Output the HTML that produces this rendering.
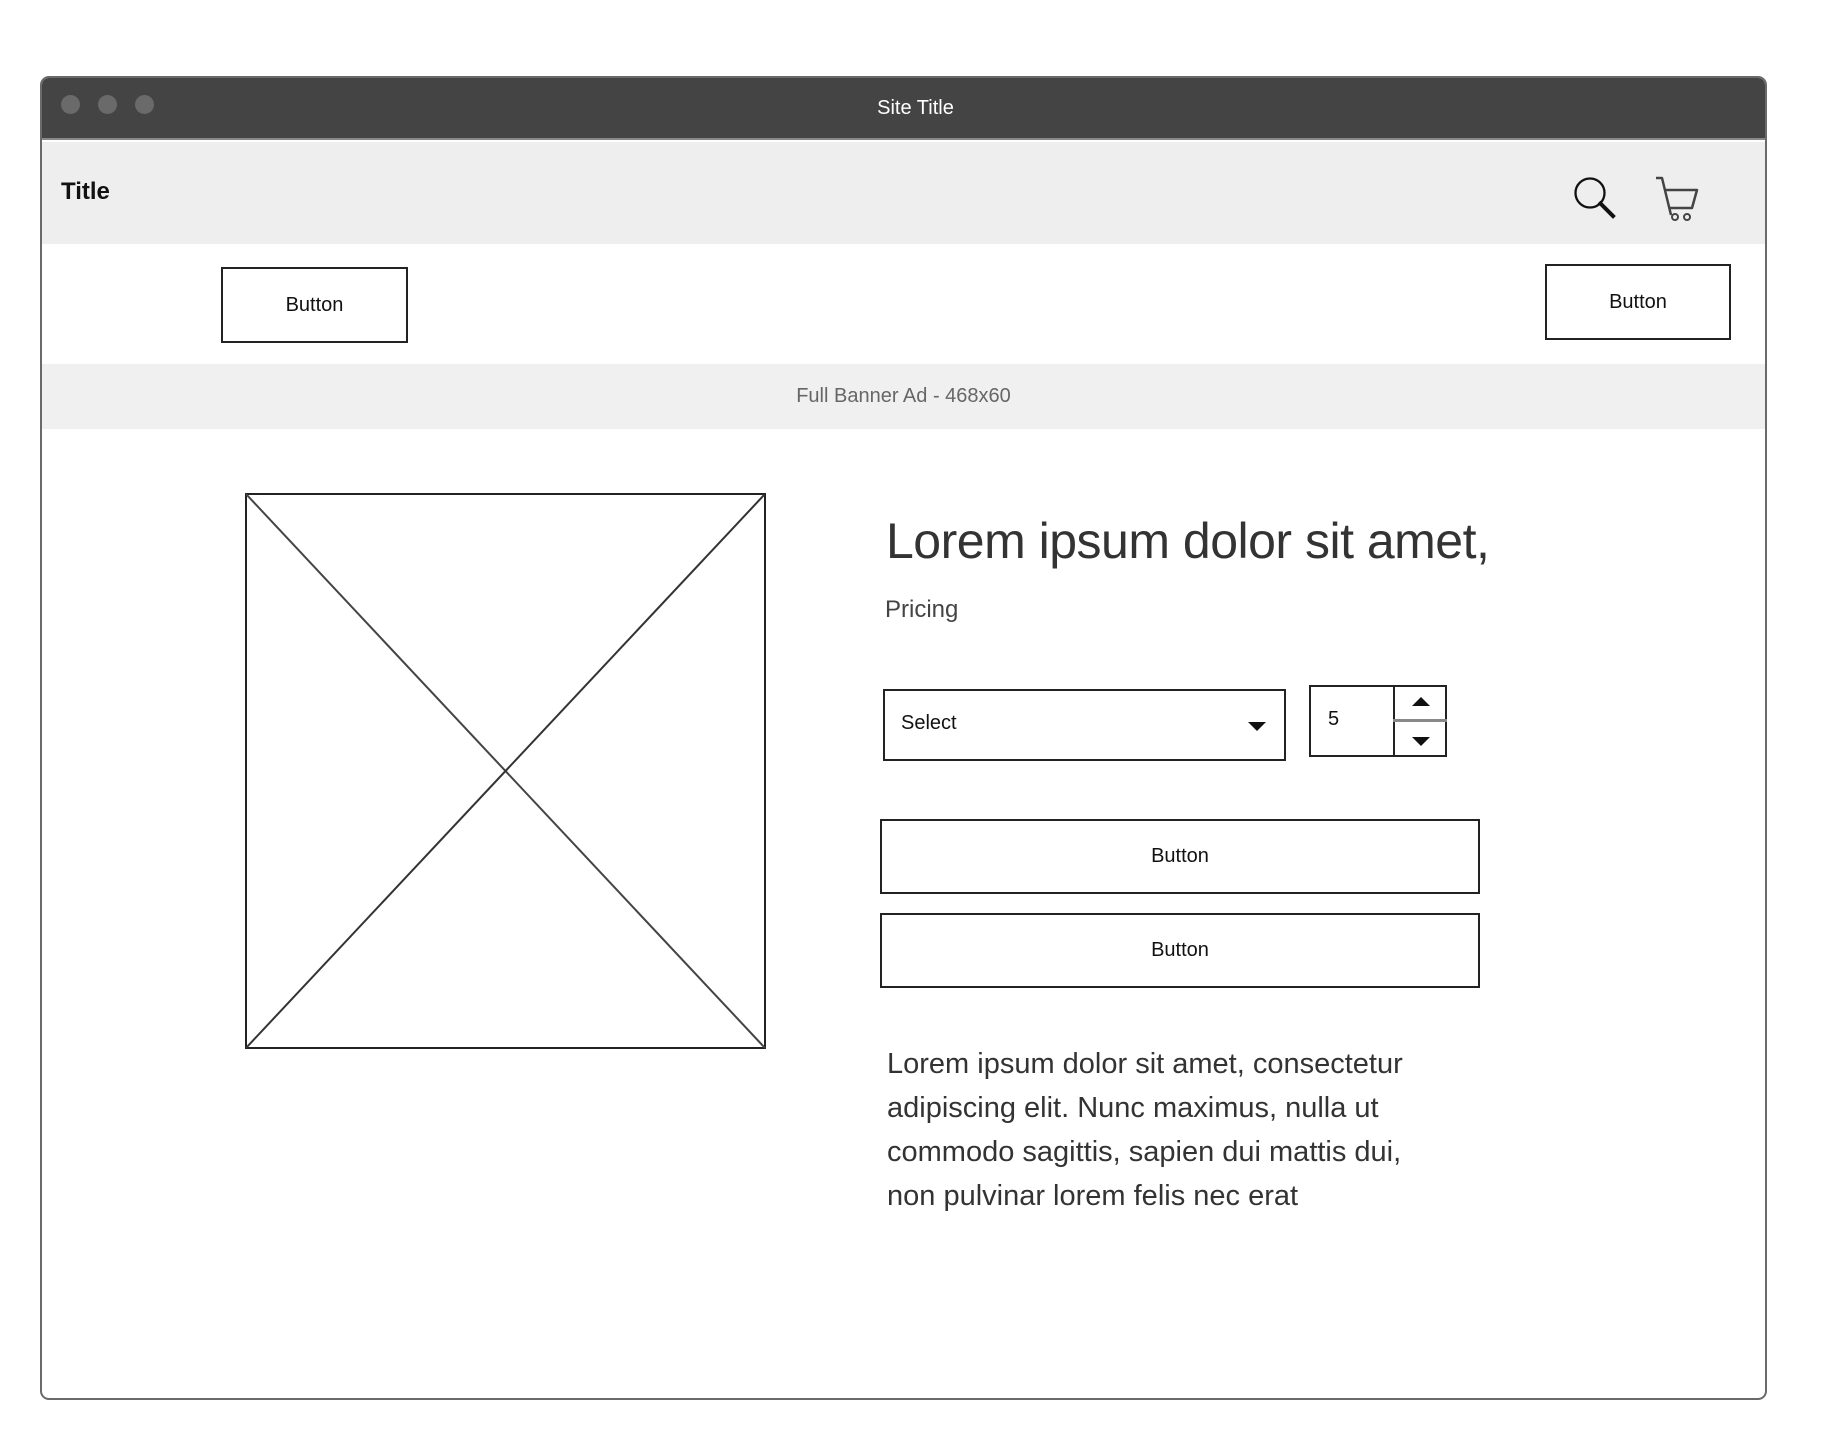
<!DOCTYPE html>
<html><head><meta charset="utf-8"><style>
*{margin:0;padding:0;box-sizing:border-box}
body{width:1830px;height:1454px;background:#fff;position:relative;overflow:hidden;font-family:"Liberation Sans",sans-serif;color:#222}
.a{position:absolute}
.win{left:40px;top:76px;width:1727px;height:1324px;border:2px solid #6a6a6a;border-radius:9px;overflow:hidden;background:#fff}
.btn{position:absolute;border:2px solid #222;background:#fff;display:flex;align-items:center;justify-content:center;font-size:20px;color:#111}
.dot{position:absolute;width:19px;height:19px;border-radius:50%;background:#6a6a6a;top:17px}
</style></head><body>
<div class="a win">
 <div class="a" style="left:0;top:0;width:100%;height:62px;background:#444;border-bottom:2px solid #888"></div>
 <div class="dot" style="left:19px"></div><div class="dot" style="left:56px"></div><div class="dot" style="left:93px"></div>
 <div class="a" style="left:12px;top:0;width:100%;height:62px;line-height:60px;text-align:center;color:#fff;font-size:20px">Site Title</div>
 <div class="a" style="left:0;top:64px;width:100%;height:102px;background:#eee"></div>
 <div class="a" style="left:19px;top:100px;font-size:24px;font-weight:bold;color:#111">Title</div>
 <svg class="a" style="left:1530px;top:97px" width="48" height="46" viewBox="0 0 48 46"><circle cx="18" cy="18" r="14.5" fill="none" stroke="#111" stroke-width="2.3"/><line x1="28.5" y1="28.5" x2="41" y2="41" stroke="#111" stroke-width="4" stroke-linecap="square"/></svg>
 <svg class="a" style="left:1612px;top:97px" width="52" height="48" viewBox="0 0 52 48"><path d="M2 3 H8 L17 40 M10 15 H43 L38 33 H15" fill="none" stroke="#444" stroke-width="2.5" stroke-linejoin="round"/><circle cx="21" cy="42" r="3" fill="none" stroke="#444" stroke-width="2"/><circle cx="33" cy="42" r="3" fill="none" stroke="#444" stroke-width="2"/></svg>
 <div class="btn" style="left:179px;top:189px;width:187px;height:76px">Button</div>
 <div class="btn" style="left:1503px;top:186px;width:186px;height:76px">Button</div>
 <div class="a" style="left:0;top:286px;width:100%;height:65px;background:#f0f0f0;line-height:65px;text-align:center;font-size:20px;color:#666">Full Banner Ad - 468x60</div>
 <svg class="a" style="left:203px;top:415px" width="521" height="556"><rect x="1" y="1" width="519" height="554" fill="none" stroke="#222" stroke-width="2"/><line x1="1" y1="1" x2="520" y2="555" stroke="#444" stroke-width="2"/><line x1="520" y1="1" x2="1" y2="555" stroke="#333" stroke-width="2"/></svg>
 <div class="a" style="left:844px;top:434px;font-size:50px;color:#333;letter-spacing:-0.5px;white-space:nowrap">Lorem ipsum dolor sit amet,</div>
 <div class="a" style="left:843px;top:518px;font-size:24px;color:#444">Pricing</div>
 <div class="a" style="left:841px;top:611px;width:403px;height:72px;border:2px solid #222"></div>
 <div class="a" style="left:859px;top:634px;font-size:20px;color:#111">Select</div>
 <svg class="a" style="left:1206px;top:644px" width="18" height="10"><path d="M0 0H18L9 9Z" fill="#111"/></svg>
 <div class="a" style="left:1267px;top:607px;width:138px;height:72px;border:2px solid #222"></div>
 <div class="a" style="left:1351px;top:607px;width:2px;height:72px;background:#222"></div>
 <div class="a" style="left:1351px;top:641px;width:54px;height:3px;background:#888"></div>
 <div class="a" style="left:1286px;top:630px;font-size:20px;color:#111">5</div>
 <svg class="a" style="left:1370px;top:619px" width="18" height="10"><path d="M0 9H18L9 0Z" fill="#111"/></svg>
 <svg class="a" style="left:1370px;top:659px" width="18" height="10"><path d="M0 0H18L9 9Z" fill="#111"/></svg>
 <div class="btn" style="left:838px;top:741px;width:600px;height:75px">Button</div>
 <div class="btn" style="left:838px;top:835px;width:600px;height:75px">Button</div>
 <div class="a" style="left:845px;top:964px;font-size:29px;line-height:44px;color:#333;letter-spacing:0px;white-space:nowrap">Lorem ipsum dolor sit amet, consectetur<br>adipiscing elit. Nunc maximus, nulla ut<br>commodo sagittis, sapien dui mattis dui,<br>non pulvinar lorem felis nec erat</div>
</div>
</body></html>
